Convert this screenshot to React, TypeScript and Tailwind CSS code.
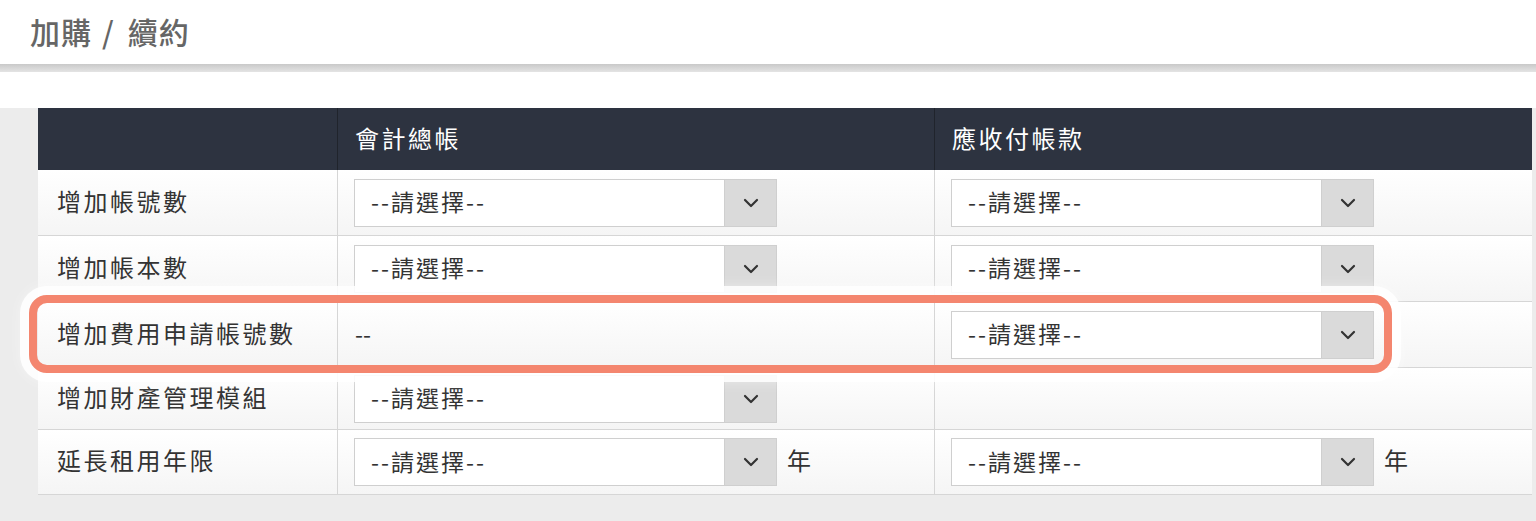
import React from "react";

type Cell = { kind: "select"; suffix?: string } | { kind: "text"; value: string } | { kind: "empty" };

type Row = { label: string; height: string; cells: [Cell, Cell] };

const rows: Row[] = [
  { label: "增加帳號數", height: "h-[66px]", cells: [{ kind: "select" }, { kind: "select" }] },
  { label: "增加帳本數", height: "h-[66px]", cells: [{ kind: "select" }, { kind: "select" }] },
  { label: "增加費用申請帳號數", height: "h-[66px]", cells: [{ kind: "text", value: "--" }, { kind: "select" }] },
  { label: "增加財產管理模組", height: "h-[62px]", cells: [{ kind: "select" }, { kind: "empty" }] },
  { label: "延長租用年限", height: "h-[65px]", cells: [{ kind: "select", suffix: "年" }, { kind: "select", suffix: "年" }] },
];

function Chevron() {
  return (
    <svg width="16" height="10" viewBox="0 0 16 10" fill="none">
      <path d="M2 2l6 6 6-6" stroke="#333" strokeWidth="2.2" strokeLinecap="round" strokeLinejoin="round" />
    </svg>
  );
}

function Select() {
  return (
    <div className="flex h-[48px] w-[423px] border border-[#cfcfcf] bg-white">
      <div className="flex flex-1 items-center pl-[16px] pb-[2px] text-[23px] tracking-[2px] text-[#333]">--請選擇--</div>
      <div className="flex w-[52px] items-center justify-center border-l border-[#cfcfcf] bg-[#dadada]">
        <Chevron />
      </div>
    </div>
  );
}

function DataCell({ cell, last }: { cell: Cell; last?: boolean }) {
  return (
    <div className={`flex items-center pl-[16px] ${last ? "" : "border-r border-[#d6d6d6]"}`}>
      {cell.kind === "select" && (
        <>
          <Select />
          {cell.suffix && <span className="ml-[10px] pb-[4px] text-[24px] text-[#333]">{cell.suffix}</span>}
        </>
      )}
      {cell.kind === "text" && <span className="pl-[1px] pb-[2px] text-[23px] text-[#333]">{cell.value}</span>}
    </div>
  );
}

export default function App() {
  return (
    <div
      className="relative h-[521px] w-[1536px] overflow-hidden bg-[#ececec]"
      style={{ fontFamily: '"Noto Sans CJK TC", "Noto Sans", sans-serif' }}
    >
      <div className="flex h-[64px] items-center bg-white pb-[2px] pl-[30px]">
        <h1 className="flex text-[30px] font-medium tracking-[1px] text-[#666]">
          <span>加購</span>
          <span className="ml-[10px] mr-[13px]">/</span>
          <span>續約</span>
        </h1>
      </div>
      <div className="h-[8px] bg-gradient-to-b from-[#c9c9c9] to-[#e4e4e4]" />
      <div className="h-[36px] bg-white" />

      <div className="pl-[38px] pr-[4px]">
        <div className="w-[1494px]">
          <div className="grid h-[62px] grid-cols-[300px_597px_597px] bg-[#2d3340] text-[24px] tracking-[2.5px] text-white">
            <div className="border-r border-[#20242c]" />
            <div className="flex items-center border-r border-[#20242c] pb-[2px] pl-[17px]">會計總帳</div>
            <div className="flex items-center pb-[2px] pl-[17px]">應收付帳款</div>
          </div>
          {rows.map((r) => (
            <div
              key={r.label}
              className={`grid ${r.height} grid-cols-[300px_597px_597px] border-b border-[#d6d6d6] bg-gradient-to-b from-white to-[#f5f5f5]`}
            >
              <div className="flex items-center border-r border-[#d6d6d6] pb-[4px] pl-[19px] text-[24px] tracking-[2.5px] text-[#333]">
                {r.label}
              </div>
              <DataCell cell={r.cells[0]} />
              <DataCell cell={r.cells[1]} last />
            </div>
          ))}
        </div>
      </div>

      <div className="pointer-events-none absolute left-[29px] top-[295px] h-[78px] w-[1363px] rounded-[18px] border-[8px] border-[#f4866f] shadow-[0_0_0_9px_rgba(255,255,255,0.85),0_0_14px_9px_rgba(255,255,255,0.4)]" />
    </div>
  );
}
